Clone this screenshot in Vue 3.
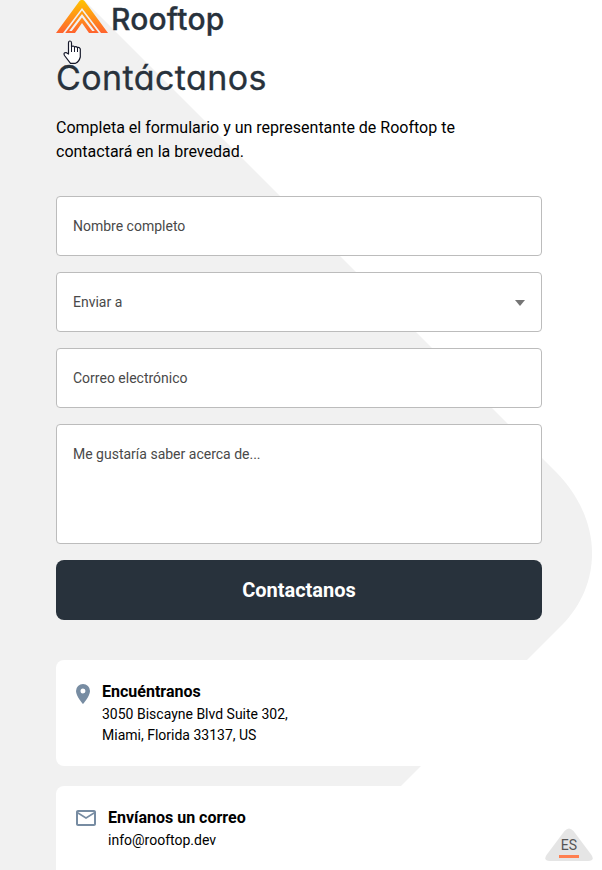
<script setup>
const fields = [
  { label: 'Nombre completo' },
  { label: 'Enviar a', select: true },
  { label: 'Correo electrónico' },
  { label: 'Me gustaría saber acerca de...', tall: true },
]
</script>

<template>
  <main class="page">
    <svg class="backdrop" width="602" height="870" viewBox="0 0 602 870">
      <path d="M0 0H84L556 472C603 520 603 583 562 625L317 870H0Z" fill="#f1f1f1" />
    </svg>
    <div class="content">
      <header class="brand">
        <svg class="mark" width="52" height="34" viewBox="0 0 52 34">
          <defs>
            <linearGradient id="flame" x1="0" y1="0" x2="0" y2="34" gradientUnits="userSpaceOnUse">
              <stop offset="0" stop-color="#ffc400" />
              <stop offset="1" stop-color="#ff6030" />
            </linearGradient>
          </defs>
          <path fill="url(#flame)" fill-rule="evenodd" d="M0 33L23.500 1Q26 -1.500 28.500 1L52 33H45L26 8L7 33ZM9.200 33L26 10.500L42.800 33H33L26 23L19 33ZM13.200 31H15.800L26 17.500L36.200 31H38.800L26 14Z" />
        </svg>
        <span class="wordmark">Rooftop</span>
      </header>
      <h1 class="title">Contáctanos</h1>
      <p class="intro">Completa el formulario y un representante de Rooftop te contactará en la brevedad.</p>
      <form class="form" @submit.prevent>
        <div v-for="f in fields" :key="f.label" class="field" :class="{ tall: f.tall }">
          <span>{{ f.label }}</span>
          <i v-if="f.select" class="caret"></i>
        </div>
        <button class="submit">Contactanos</button>
      </form>
      <section class="card">
        <svg class="pin" width="14" height="20" viewBox="5 2 14 20">
          <path fill="#778ca2" d="M12 2a7 7 0 0 0-7 7c0 5.250 7 13 7 13s7-7.750 7-13a7 7 0 0 0-7-7zm0 9.500a2.500 2.500 0 1 1 0-5 2.500 2.500 0 0 1 0 5z" />
        </svg>
        <div>
          <h2>Encuéntranos</h2>
          <p>3050 Biscayne Blvd Suite 302,<br />Miami, Florida 33137, US</p>
        </div>
      </section>
      <section class="card mail">
        <svg class="envelope" width="20" height="16" viewBox="2 4 20 16">
          <path fill="#778ca2" d="M22 6c0-1.100-.9-2-2-2H4c-1.100 0-2 .9-2 2v12c0 1.100.9 2 2 2h16c1.100 0 2-.9 2-2V6zm-2 0l-8 5-8-5h16zm0 12H4V8l8 5 8-5v10z" />
        </svg>
        <div>
          <h2>Envíanos un correo</h2>
          <p>info@rooftop.dev</p>
        </div>
      </section>
    </div>
    <svg class="cursor" width="18" height="25" viewBox="0 0 18 25">
      <path d="M5.500 14V3Q5.500 1 7 1T8.500 3V7Q10 5 11.500 7Q13 6 14.500 7.500Q16.500 7 17.300 9V17Q16 22 12.500 23.300H7.500L1.500 15.500Q0 12.500 3 12.500Z" fill="#fff" stroke="#16192b" stroke-width="1.200" stroke-linejoin="round" />
      <path d="M8.500 7V12M11.500 7V12M14.500 8V12" stroke="#16192b" />
    </svg>
    <div class="language">
      <svg class="triangle" width="48" height="34" viewBox="0 0 48 34">
        <path d="M19.500 3Q24-2 28.500 3L46.500 27Q50 33 43 33H5Q-2 33 1.500 27Z" fill="#e5e5e5" />
      </svg>
      <span>ES</span>
    </div>
  </main>
</template>

<style>
body { margin: 0; background: #fff; }
</style>

<style scoped>
.page { position: relative; width: 602px; height: 870px; overflow: hidden; font-family: Roboto, sans-serif; color: #000; }
.backdrop { position: absolute; inset: 0; }
.content { position: relative; width: 486px; margin-left: 56px; }
.brand { display: flex; height: 40px; }
.mark { flex: none; }
.wordmark { margin-left: 3px; font: 500 30px/38px Inter, sans-serif; letter-spacing: 0.2px; color: #28323c; -webkit-text-stroke: 0.3px #28323c; }
.title { margin: 13px 0 0; font: 400 34px/50px Inter, sans-serif; font-feature-settings: "cv11"; letter-spacing: 0.4px; color: #28323c; -webkit-text-stroke: 0.3px #28323c; }
.intro { margin: 13px 0 0; width: 440px; font-size: 16px; line-height: 24px; }
.form { display: flex; flex-direction: column; gap: 16px; margin-top: 32px; }
.field { box-sizing: border-box; height: 60px; padding: 0 16px; display: flex; align-items: center; justify-content: space-between; border: 1px solid #bcbcbc; border-radius: 4px; background: #fff; font-size: 14px; line-height: 20px; color: #494949; }
.tall { height: 120px; align-items: flex-start; padding-top: 19px; }
.caret { margin-top: 1px; border: 5px solid transparent; border-top: 6px solid #757575; border-bottom: 0; }
.submit { height: 60px; padding: 0; border: 0; border-radius: 8px; background: #28323c; color: #fff; font: 700 20px/24px Roboto, sans-serif; }
.card { box-sizing: border-box; height: 106px; margin-top: 40px; padding: 20px; display: flex; border-radius: 8px; background: #fff; }
.card h2 { margin: 0; font-size: 16px; line-height: 24px; font-weight: 700; }
.card p { margin: 0; font-size: 14px; line-height: 21px; }
.pin { margin: 4px 12px 0 0; }
.card.mail { margin-top: 20px; }
.envelope { margin: 4px 12px 0 0; }
.cursor { position: absolute; left: 63px; top: 40px; }
.language { position: absolute; left: 545px; top: 828px; width: 48px; height: 34px; display: flex; justify-content: center; }
.triangle { position: absolute; inset: 0; }
.language span { position: relative; width: 20px; height: 19px; margin-top: 8px; border-bottom: 3px solid #ff7f50; text-align: center; font-size: 14px; line-height: 19px; color: #555; }
</style>
